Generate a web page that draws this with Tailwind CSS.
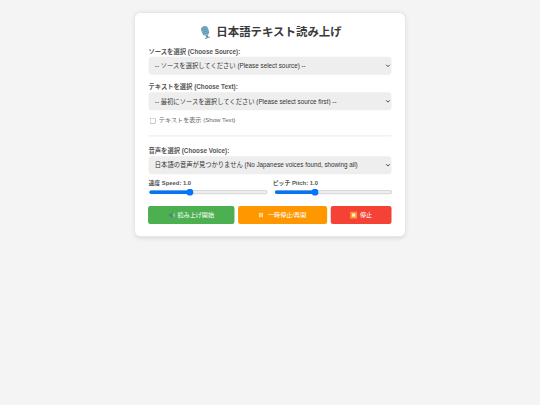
<!DOCTYPE html>
<html lang="ja">
<head>
    <meta charset="UTF-8">
    <meta name="viewport" content="width=device-width, initial-scale=1.0">
    <title>日本語テキスト読み上げ</title>
    <script src="https://cdn.jsdelivr.net/npm/@tailwindcss/browser@4"></script>
</head>
<body class="bg-[#f4f4f4] text-[#333] font-['Liberation_Sans','Noto_Sans_CJK_JP',sans-serif]">
    <div class="w-[540px] h-[405px] overflow-hidden">
        <!-- 元の画面は1200px幅、全体を縮小 -->
        <div class="w-[1200px] h-[900px] pt-[29px] origin-top-left scale-[0.45]">
            <div class="w-[600px] h-[496px] mx-auto px-[30px] pt-[26px] bg-white rounded-[12px] shadow-[0_2px_12px_rgba(0,0,0,0.12)]">
                <!-- タイトル -->
                <h1 class="flex justify-center items-center gap-[12px] h-[34px] pl-[4px] text-[25.4px] leading-[34px] font-bold text-[#3a3a3a]">
                    <svg class="w-[24px] h-[33px]" viewBox="0 0 24 33">
                        <g transform="rotate(-18 12 16)">
                            <rect x="4" y="1" width="16" height="22" rx="8" fill="#7fb3c9"/>
                            <path d="M5 6h14M5 10h14M5 14h14M5 18h14" stroke="#4d8aa6" stroke-width="1.4"/>
                            <rect x="10" y="23" width="4" height="5" fill="#5c7480"/>
                            <rect x="6" y="27" width="12" height="3" rx="1.5" fill="#8da3ad"/>
                        </g>
                    </svg>
                    <span>日本語テキスト読み上げ</span>
                </h1>

                <div class="mt-[16px]">
                    <label class="block h-[18px] mb-[3px] text-[14px] leading-[18px] font-bold text-[#555]">ソースを選択 (Choose Source):</label>
                    <select class="block w-full h-[40px] px-[10px] text-[14px] text-[#333] bg-[#eee] rounded-[8px]">
                        <option>-- ソースを選択してください (Please select source) --</option>
                    </select>
                </div>

                <div class="mt-[18px]">
                    <label class="block h-[18px] mb-[3px] text-[14px] leading-[18px] font-bold text-[#555]">テキストを選択 (Choose Text):</label>
                    <select class="block w-full h-[40px] px-[10px] text-[14px] text-[#333] bg-[#eee] rounded-[8px]">
                        <option>-- 最初にソースを選択してください (Please select source first) --</option>
                    </select>
                </div>

                <div class="flex items-center mt-[14px] h-[18px]">
                    <input type="checkbox" class="ml-[3px] mr-[7px]">
                    <span class="text-[13.6px] leading-[18px] text-[#666]">テキストを表示 (Show Text)</span>
                </div>

                <hr class="mt-[24px] border-0 h-[2px] bg-[#e8e8e8]">

                <div class="mt-[23px]">
                    <label class="block h-[18px] mb-[3px] text-[14px] leading-[18px] font-bold text-[#555]">音声を選択 (Choose Voice):</label>
                    <select class="block w-full h-[40px] px-[10px] text-[14px] text-[#333] bg-[#eee] rounded-[8px]">
                        <option>日本語の音声が見つかりません (No Japanese voices found, showing all)</option>
                    </select>
                </div>

                <!-- スライダー -->
                <div class="flex gap-[12px] mt-[10px]">
                    <div class="w-[264px]">
                        <label class="block h-[18px] text-[13px] leading-[18px] font-bold text-[#555]">速度 Speed: 1.0</label>
                        <input type="range" min="0.5" max="2" step="0.1" value="1" class="block w-[264px] ml-[1px] mt-[4px]">
                    </div>
                    <div class="w-[264px]">
                        <label class="block h-[18px] text-[13px] leading-[18px] font-bold text-[#555]">ピッチ Pitch: 1.0</label>
                        <input type="range" min="0.5" max="2" step="0.1" value="1" class="block w-[262px] ml-[4px] mt-[4px]">
                    </div>
                </div>

                <!-- ボタン -->
                <div class="flex gap-[8px] mt-[23px] -ml-[1px]">
                    <button class="flex justify-center items-center gap-[4px] w-[192px] h-[40px] text-[13.6px] text-white bg-[#4caf50] rounded-[5px]">
                        <svg class="w-[16px] h-[16px]" viewBox="0 0 16 16">
                            <path d="M1 6h3l5-4v12l-5-4H1z" fill="#5d7a88"/>
                            <path d="M11 5.5q2 2.5 0 5M13 3.5q3.500 4.500 0 9" fill="none" stroke="#c5d8de" stroke-width="1.300"/>
                        </svg>
                        <span>読み上げ開始</span>
                    </button>
                    <button class="flex justify-center items-center gap-[10px] w-[198px] h-[40px] text-[13.6px] text-white bg-[#ff9800] rounded-[5px]">
                        <svg class="w-[10px] h-[12px]" viewBox="0 0 10 12">
                            <path d="M1 1h3v10H1zM6 1h3v10H6z" fill="#fff3d8"/>
                        </svg>
                        <span>一時停止/再開</span>
                    </button>
                    <button class="flex justify-center items-center gap-[6px] w-[135px] h-[40px] text-[13.6px] text-white bg-[#f44336] rounded-[5px]">
                        <svg class="w-[16px] h-[16px]" viewBox="0 0 16 16">
                            <rect width="16" height="16" rx="1.500" fill="#ff9a2e"/>
                            <rect x="4.500" y="4.500" width="7" height="7" fill="#fff3e0"/>
                        </svg>
                        <span>停止</span>
                    </button>
                </div>
            </div>
        </div>
    </div>
</body>
</html>
